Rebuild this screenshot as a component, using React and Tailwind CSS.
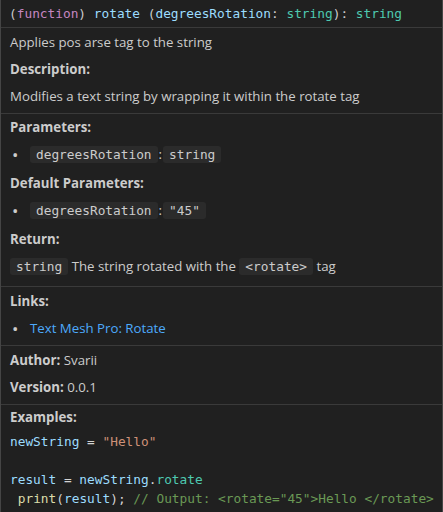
const body = "font-['Open_Sans','Noto_Sans',sans-serif] text-[13.25px]"
const mono = "font-['DejaVu_Sans_Mono','Liberation_Mono',monospace] text-[12.8px]"

const Row = ({ className = "", children }) => (
  <div className={`h-[19px] leading-[19px] whitespace-pre ${className}`}>{children}</div>
)

const Code = ({ children }) => (
  <span className={`inline-block h-[17px] rounded-[3px] bg-[#2b2b2b] px-[6px] leading-[17px] text-[#cccccc] ${mono}`}>
    {children}
  </span>
)

const Bullet = ({ children }) => (
  <Row className="flex items-center">
    <span className="w-[20px] pl-[2px] text-[17px] leading-[19px] text-[#cccccc]">•</span>
    <span className="flex items-center">{children}</span>
  </Row>
)

const Section = ({ className = "", children }) => (
  <div className={`flex flex-col border-t border-[#3a3a3a] px-[9px] ${className}`}>{children}</div>
)

export default function App() {
  return (
    <div className={`h-[512px] w-[443px] overflow-hidden border-x border-[#454545] bg-[#202020] text-[#cccccc] ${body}`}>
      {/* signature */}
      <div className={`flex h-[27px] items-center whitespace-pre px-[8px] ${mono}`}>
        <span className="text-[#cccccc]">(</span>
        <span className="text-[#c586c0]">function</span>
        <span className="text-[#cccccc]">) </span>
        <span className="text-[#9cdcfe]">rotate</span>
        <span className="text-[#cccccc]"> (</span>
        <span className="text-[#9cdcfe]">degreesRotation</span>
        <span className="text-[#cccccc]">: </span>
        <span className="text-[#4ec9b0]">string</span>
        <span className="text-[#cccccc]">): </span>
        <span className="text-[#4ec9b0]">string</span>
      </div>

      <Section className="gap-[8px] pt-[5px] pb-[7px]">
        <Row>Applies pos arse tag to the string</Row>
        <Row className="font-bold">Description:</Row>
        <Row>Modifies a text string by wrapping it within the rotate tag</Row>
      </Section>

      <Section className="pt-[4px] pb-[10px]">
        <Row className="font-bold">Parameters:</Row>
        <div className="mt-[8px]">
          <Bullet>
            <Code>degreesRotation</Code>
            <span className="mx-[1px]">:</span>
            <Code>string</Code>
          </Bullet>
        </div>
        <Row className="mt-[10px] font-bold">Default Parameters:</Row>
        <div className="mt-[8px]">
          <Bullet>
            <Code>degreesRotation</Code>
            <span className="mx-[1px]">:</span>
            <Code>"45"</Code>
          </Bullet>
        </div>
        <Row className="mt-[10px] font-bold">Return:</Row>
        <Row className="mt-[8px] flex items-center">
          <Code>string</Code>
          <span> The string rotated with the </span>
          <Code>&lt;rotate&gt;</Code>
          <span> tag</span>
        </Row>
      </Section>

      <Section className="gap-[8px] pt-[5px] pb-[7px]">
        <Row className="font-bold">Links:</Row>
        <Bullet>
          <span className="text-[#4daafc]">Text Mesh Pro: Rotate</span>
        </Bullet>
      </Section>

      <Section className="gap-[8px] pt-[5px] pb-[7px]">
        <Row>
          <span className="font-bold">Author:</span> Svarii
        </Row>
        <Row>
          <span className="font-bold">Version:</span> 0.0.1
        </Row>
      </Section>

      <Section className="pt-[3px]">
        <Row className="font-bold">Examples:</Row>
        <div className={`mt-[5px] ${mono}`}>
          <Row>
            <span className="text-[#9cdcfe]">newString</span>
            <span className="text-[#d4d4d4]"> = </span>
            <span className="text-[#ce9178]">"Hello"</span>
          </Row>
          <Row> </Row>
          <Row>
            <span className="text-[#9cdcfe]">result</span>
            <span className="text-[#d4d4d4]"> = </span>
            <span className="text-[#9cdcfe]">newString</span>
            <span className="text-[#d4d4d4]">.</span>
            <span className="text-[#4ec9b0]">rotate</span>
          </Row>
          <Row>
            <span className="text-[#d4d4d4]"> </span>
            <span className="text-[#dcdcaa]">print</span>
            <span className="text-[#d4d4d4]">(</span>
            <span className="text-[#9cdcfe]">result</span>
            <span className="text-[#d4d4d4]">); </span>
            <span className="text-[#6a9955]">// Output: &lt;rotate="45"&gt;Hello &lt;/rotate&gt;</span>
          </Row>
        </div>
      </Section>
    </div>
  )
}
